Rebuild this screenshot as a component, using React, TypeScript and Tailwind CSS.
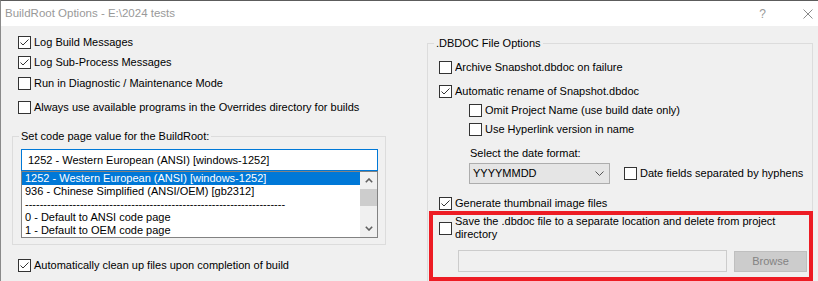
import React from 'react';

const Check = ({ checked }: { checked?: boolean }) => (
  <span className="w-[13px] h-[13px] shrink-0 border border-[#333333] bg-white flex items-center justify-center">
    {checked && (
      <svg width="11" height="11" viewBox="0 0 11 11">
        <polyline points="1.5,5.5 4,8 9.5,2.5" fill="none" stroke="#333333" strokeWidth="1" />
      </svg>
    )}
  </span>
);

const Row = ({ checked, label, className = '' }: { checked?: boolean; label: string; className?: string }) => (
  <div className={`flex items-center h-[13px] ${className}`}>
    <Check checked={checked} />
    <span className="ml-[3px] whitespace-nowrap leading-[13px]">{label}</span>
  </div>
);

const Chevron = ({ up }: { up?: boolean }) => (
  <svg width="8" height="5" viewBox="0 0 8 5">
    <polyline
      points={up ? '0.8,4.2 4,1 7.2,4.2' : '0.8,0.8 4,4 7.2,0.8'}
      fill="none"
      stroke="#606060"
      strokeWidth="1.6"
    />
  </svg>
);

const codePages = [
  '1252 - Western European (ANSI) [windows-1252]',
  '936 - Chinese Simplified (ANSI/OEM) [gb2312]',
  '-'.repeat(71),
  '0 - Default to ANSI code page',
  '1 - Default to OEM code page',
];

export default function App() {
  return (
    <div className="relative w-[818px] h-[281px] overflow-hidden bg-[#f0f0f0] border-t border-l border-t-[#5c5c5c] border-l-[#8a8a8a] text-[11px] text-black font-['Liberation_Sans',Arial,sans-serif]">
      {/* title bar */}
      <div className="h-[25px] bg-white flex items-center pl-[4px] text-[#999999]">
        <span className="text-[11.5px]">BuildRoot Options - E:\2024 tests</span>
        <span className="ml-auto text-[12px]">?</span>
        <svg className="ml-[37px] mr-[5px]" width="10" height="10" viewBox="0 0 10 10">
          <path d="M0.5 0.5 L9.5 9.5 M9.5 0.5 L0.5 9.5" stroke="#8a8a8a" strokeWidth="1" />
        </svg>
      </div>

      <div className="flex h-[255px]">
        {/* left column */}
        <div className="w-[426px] shrink-0 pl-[11px] flex flex-col">
          <div className="pl-[6px]">
            <Row checked label="Log Build Messages" className="mt-[10px]" />
            <Row checked label="Log Sub-Process Messages" className="mt-[7px]" />
            <Row label="Run in Diagnostic / Maintenance Mode" className="mt-[8px]" />
            <Row label="Always use available programs in the Overrides directory for builds" className="mt-[11px]" />
          </div>

          <fieldset className="mt-[14px] w-[374px] h-[117px] border border-[#dcdcdc]">
            <legend className="ml-[6px] px-[2px] leading-[16px]">Set code page value for the BuildRoot:</legend>
            <div className="ml-[8px] mt-[5px] w-[357px]">
              <div className="h-[22px] border border-[#0078d7] bg-white flex items-center pl-[6px] whitespace-nowrap">
                1252 - Western European (ANSI) [windows-1252]
              </div>
              <div className="h-[67px] border border-[#828282] bg-white flex">
                <div className="flex-1 overflow-hidden">
                  {codePages.map((item, i) => (
                    <div
                      key={i}
                      className={
                        i === 0
                          ? 'h-[13px] leading-[13px] pl-[3px] whitespace-nowrap bg-[#0078d7] text-white'
                          : 'h-[13px] leading-[13px] pl-[3px] whitespace-nowrap'
                      }
                    >
                      {item}
                    </div>
                  ))}
                </div>
                <div className="w-[17px] bg-[#f0f0f0] flex flex-col">
                  <div className="h-[17px] flex items-center justify-center">
                    <Chevron up />
                  </div>
                  <div className="h-[17px] bg-[#cdcdcd]" />
                  <div className="flex-1" />
                  <div className="h-[17px] flex items-center justify-center">
                    <Chevron />
                  </div>
                </div>
              </div>
            </div>
          </fieldset>

          <div className="pl-[6px]">
            <Row checked label="Automatically clean up files upon completion of build" className="mt-[14px]" />
          </div>
        </div>

        {/* right column */}
        <div className="flex-1">
          <fieldset className="mt-[9px] w-[386px] h-[270px] border border-[#dcdcdc]">
            <legend className="ml-[6px] px-[2px] leading-[16px]">.DBDOC File Options</legend>
            <div className="pl-[11px] flex flex-col">
              <div className="flex items-start h-[13px] mt-[10px]">
                <Check />
                <span className="ml-[3px] whitespace-nowrap leading-[13px] h-[10px] overflow-hidden">
                  Archive Snapshot.dbdoc on failure
                </span>
              </div>
              <Row checked label="Automatic rename of Snapshot.dbdoc" className="mt-[11px]" />
              <Row label="Omit Project Name (use build date only)" className="mt-[6px] ml-[30px]" />
              <Row label="Use Hyperlink version in name" className="mt-[6px] ml-[30px]" />
              <div className="mt-[9px] ml-[31px] leading-[16px]">Select the date format:</div>
              <div className="mt-[2px] ml-[30px] flex items-center">
                <div className="w-[141px] h-[21px] border border-[#adadad] bg-[#e5e5e5] flex items-center pl-[3px] pr-[5px]">
                  <span>YYYYMMDD</span>
                  <svg className="ml-auto" width="9" height="5" viewBox="0 0 9 5">
                    <polyline points="0.5,0.5 4.5,4.5 8.5,0.5" fill="none" stroke="#555555" strokeWidth="1" />
                  </svg>
                </div>
                <Row label="Date fields separated by hyphens" className="ml-[14px]" />
              </div>
              <Row checked label="Generate thumbnail image files" className="mt-[13px]" />
              <div className="mt-[5px] flex items-center">
                <Check />
                <span className="ml-[3px] whitespace-nowrap leading-[13px]">
                  Save the .dbdoc file to a separate location and delete from project
                  <br />
                  directory
                </span>
              </div>
              <div className="mt-[9px] ml-[19px] flex items-center">
                <div className="w-[269px] h-[22px] border border-[#cccccc] bg-[#f0f0f0]" />
                <div className="ml-[7px] w-[73px] h-[21px] border border-[#bfbfbf] bg-[#cccccc] text-[#838383] flex items-center justify-center">
                  Browse
                </div>
              </div>
            </div>
          </fieldset>
        </div>
      </div>

      {/* annotation */}
      <div className="absolute left-[428px] top-[210px] w-[384px] h-[70px] border-4 border-[#ed1c24]" />
    </div>
  );
}
